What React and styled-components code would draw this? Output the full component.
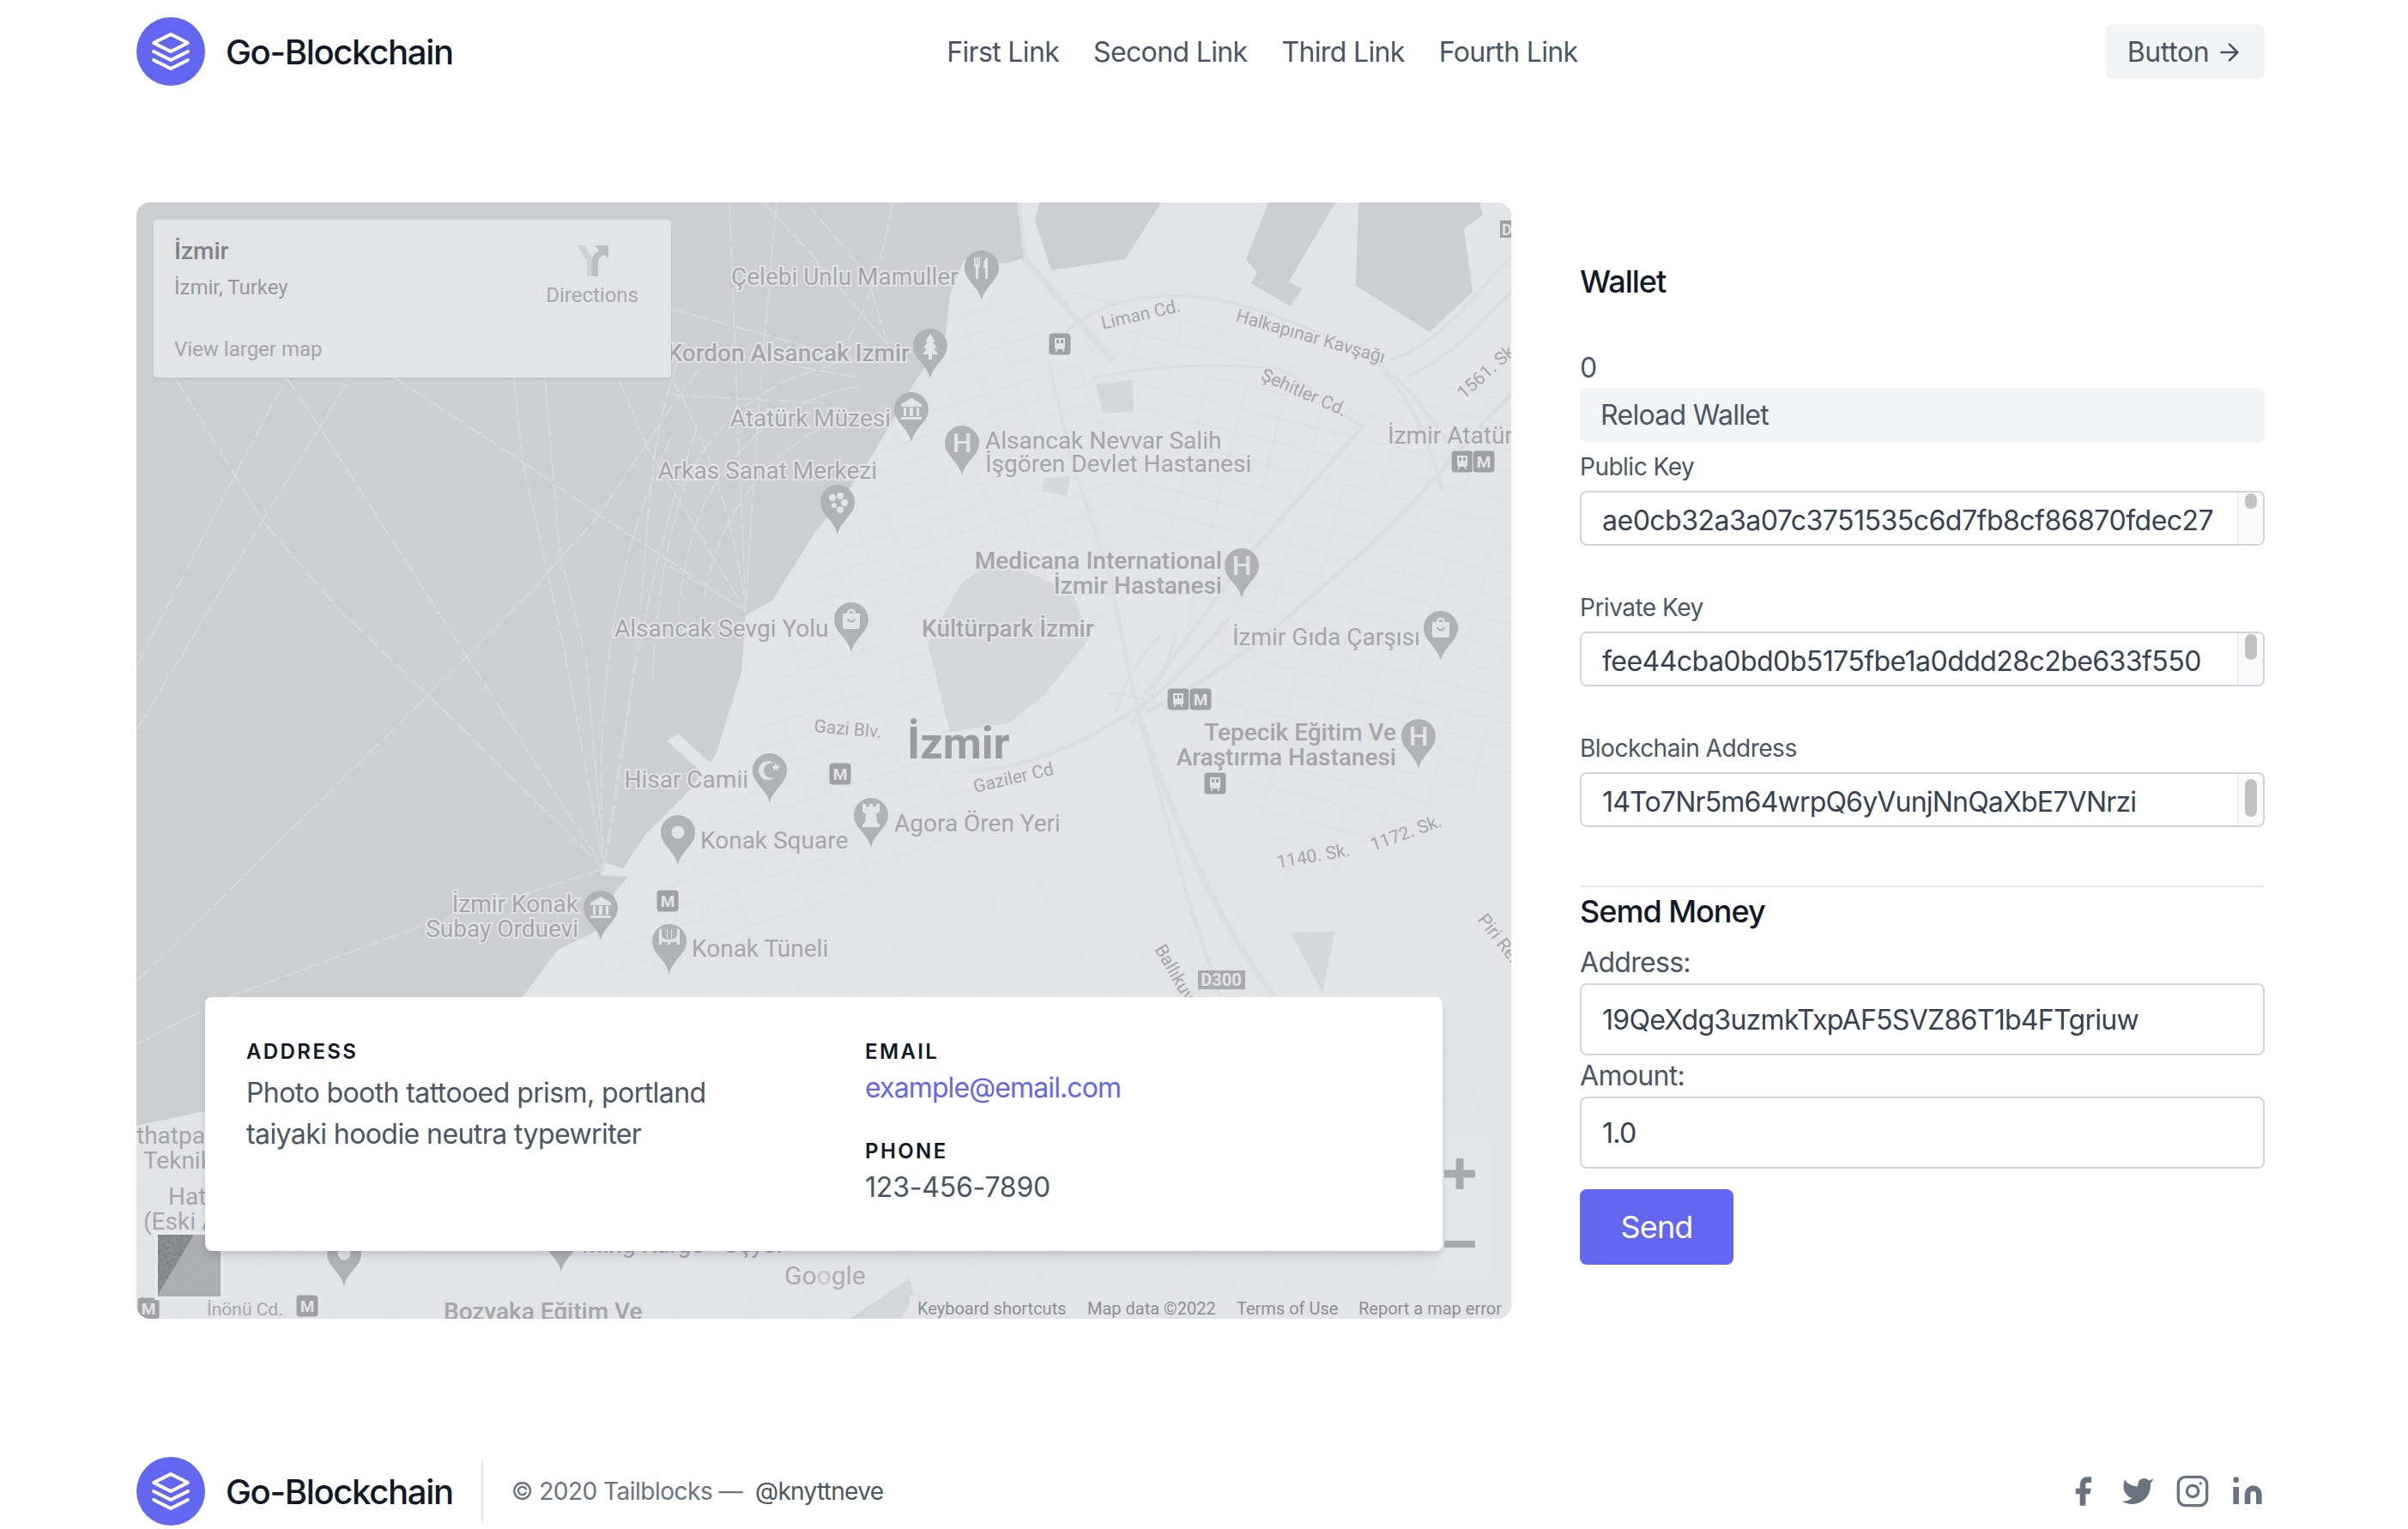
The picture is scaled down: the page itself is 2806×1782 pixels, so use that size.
import React from "react"
import styled, { createGlobalStyle } from "styled-components"

const GlobalStyle = createGlobalStyle`
  html, body {
    margin: 0;
    padding: 0;
    height: 1782px;
    overflow: hidden;
    background: #fff;
    font-family: Inter, "Liberation Sans", sans-serif;
  }
  * { box-sizing: border-box; }
`

const colors = {
  indigo: "#6366f1",
  dark: "#111827",
  text: "#4b5563",
  inputText: "#374151",
  muted: "#6b7280",
  line: "#e5e7eb",
  water: "#cdced2",
  land: "#e3e4e8",
  park: "#d6d7db",
  road: "#dcdde1",
  street: "#dcdde1",
  label: "#a5a6aa",
  pin: "#b1b2b6",
  badge: "#9fa0a4",
}

const Page = styled.div`
  width: 2806px;
  padding: 0 167px 0 159px;
`

const Header = styled.header`
  display: flex;
  align-items: center;
  height: 120px;
`

const Brand = styled.a`
  display: flex;
  align-items: center;
  font-size: 40px;
  line-height: 56px;
  font-weight: 500;
  letter-spacing: -1.3px;
  color: ${colors.dark};

  span {
    margin-left: 24px;
    padding-top: 2px;
  }
`

const LogoMark = styled.svg`
  width: 80px;
  height: 80px;
  padding: 16px;
  border-radius: 50%;
  background: ${colors.indigo};
  color: #fff;
  fill: none;
  stroke: currentColor;
  stroke-width: 2;
  stroke-linecap: round;
  stroke-linejoin: round;
`

const Nav = styled.nav`
  display: flex;
  margin: 0 auto;
  padding-top: 2px;
  font-size: 32px;
  line-height: 48px;
  letter-spacing: -0.65px;
  color: ${colors.text};

  a {
    margin-right: 40px;
  }
`

const HeaderButton = styled.button`
  display: flex;
  align-items: center;
  justify-content: center;
  width: 185px;
  height: 64px;
  padding: 2px 0 0;
  border: 0;
  border-radius: 8px;
  background: #f3f4f6;
  color: ${colors.text};
  font: inherit;
  font-size: 32px;
  line-height: 48px;
  letter-spacing: -0.4px;

  svg {
    width: 32px;
    height: 32px;
    margin-left: 8px;
    fill: none;
    stroke: currentColor;
    stroke-width: 2;
    stroke-linecap: round;
    stroke-linejoin: round;
  }
`

const Main = styled.main`
  display: flex;
  gap: 80px;
  padding-top: 116px;
`

const MapBox = styled.section`
  position: relative;
  display: flex;
  align-items: flex-end;
  flex: 0 0 1602px;
  height: 1301px;
  padding: 0 80px 79px;
  border-radius: 16px;
  overflow: hidden;
  background: ${colors.land};
`

const MapDrawing = styled.svg`
  position: absolute;
  inset: 0;
  width: 100%;
  height: 100%;
`

const MapText = styled.text`
  font-family: Roboto, "Liberation Sans", sans-serif;
  font-size: ${(p) => p.$size || 28}px;
  font-weight: ${(p) => p.$weight || 400};
  fill: ${(p) => p.$fill || colors.label};
  text-anchor: ${(p) => p.$anchor || "start"};
  stroke: ${(p) => (p.$noHalo ? "none" : p.$halo || colors.land)};
  stroke-width: 4px;
  paint-order: stroke;
`

const PlacePanel = styled.div`
  position: absolute;
  top: 20px;
  left: 20px;
  display: flex;
  justify-content: space-between;
  width: 603px;
  height: 184px;
  padding: 20px 38px 0 24px;
  border-radius: 4px;
  background: ${colors.land};
  box-shadow: 0 2px 4px rgba(0, 0, 0, 0.06);
  font-family: Roboto, "Liberation Sans", sans-serif;
`

const PlaceTitle = styled.div`
  font-size: 28px;
  line-height: 34px;
  font-weight: 500;
  color: #818286;
`

const PlaceSub = styled.div`
  margin-top: 10px;
  font-size: 24px;
  line-height: 30px;
  color: #97989c;
`

const LargerMap = styled.div`
  margin-top: 42px;
  font-size: 24px;
  line-height: 30px;
  color: #a5a6aa;
`

const Directions = styled.div`
  display: flex;
  flex-direction: column;
  align-items: center;
  padding-top: 8px;
  font-size: 24px;
  line-height: 30px;
  color: #a7a8ac;

  svg {
    width: 40px;
    height: 38px;
    margin-bottom: 7px;
  }
`

const ContactCard = styled.div`
  position: relative;
  display: flex;
  width: 100%;
  height: 296px;
  padding: 48px 0 0;
  border-radius: 8px;
  background: #fff;
  box-shadow: 0 8px 12px -2px rgba(0, 0, 0, 0.1), 0 4px 8px -2px rgba(0, 0, 0, 0.06);
`

const ContactColumn = styled.div`
  width: 50%;
  padding: 0 48px;
`

const ContactHeading = styled.h2`
  margin: ${(p) => (p.$spaced ? "32px" : "0")} 0 0;
  font-size: 24px;
  line-height: 32px;
  font-weight: 600;
  letter-spacing: 2.4px;
  color: ${colors.dark};
`

const ContactText = styled.p`
  margin: 8px 0 0;
  font-size: 32px;
  line-height: 48px;
  letter-spacing: -0.58px;
  color: ${colors.text};
`

const ContactLink = styled.a`
  display: block;
  font-size: 32px;
  line-height: 52px;
  letter-spacing: -0.88px;
  color: ${colors.indigo};
`

const ContactPhone = styled.p`
  margin: 0;
  font-size: 32px;
  line-height: 52px;
  letter-spacing: -0.2px;
  color: ${colors.text};
`

const Side = styled.aside`
  flex: 1;
  min-width: 0;
  padding-top: 64px;
`

const SideTitle = styled.h2`
  margin: 0 0 ${(p) => p.$gap}px;
  font-size: 36px;
  line-height: 56px;
  font-weight: 500;
  letter-spacing: -1px;
  color: ${colors.dark};
`

const Balance = styled.p`
  margin: 0;
  padding-top: 2px;
  font-size: 32px;
  line-height: 46px;
  color: ${colors.text};
`

const ReloadButton = styled.button`
  display: block;
  width: 100%;
  height: 64px;
  padding: 8px 24px;
  border: 0;
  border-radius: 8px;
  background: #f3f4f6;
  color: ${colors.text};
  font: inherit;
  font-size: 32px;
  line-height: 48px;
  letter-spacing: -0.7px;
  text-align: left;
`

const SmallLabel = styled.label`
  display: block;
  font-size: 28px;
  line-height: 56px;
  letter-spacing: -0.5px;
  color: ${colors.text};
`

const KeyField = styled.div`
  display: flex;
  height: 64px;
  margin-bottom: 44px;
  border: 2px solid #d1d5db;
  border-radius: 8px;
  overflow: hidden;
  background: #fff;
`

const KeyValue = styled.div`
  flex: 1;
  min-width: 0;
  padding: 7px 24px 0;
  font-size: 32px;
  line-height: 52px;
  letter-spacing: ${(p) => p.$tracking}px;
  color: ${colors.inputText};
  white-space: nowrap;
`

const ScrollTrack = styled.div`
  flex: 0 0 30px;
  padding: ${(p) => p.$offset}px 7px 0 8px;
  border-left: 1px solid #e8e8e8;
  background: #fafafa;
`

const ScrollThumb = styled.div`
  height: ${(p) => p.$height}px;
  border-radius: 8px;
  background: #c1c1c1;
`

const Divider = styled.hr`
  height: 2px;
  margin: 68px 0 0;
  border: 0;
  background: ${colors.line};
`

const FieldLabel = styled.label`
  display: block;
  font-size: 32px;
  line-height: 48px;
  letter-spacing: -0.7px;
  color: ${colors.text};
`

const TextInput = styled.input`
  display: block;
  width: 100%;
  height: 84px;
  padding: 4px 24px;
  border: 2px solid #d1d5db;
  border-radius: 8px;
  outline: 0;
  background: #fff;
  color: ${colors.inputText};
  font: inherit;
  font-size: 32px;
  line-height: 52px;
  letter-spacing: -0.7px;
`

const SendButton = styled.button`
  display: block;
  width: 179px;
  height: 88px;
  margin-top: 24px;
  padding: 16px 0;
  border: 0;
  border-radius: 8px;
  background: ${colors.indigo};
  color: #fff;
  font: inherit;
  font-size: 36px;
  line-height: 56px;
  letter-spacing: -0.9px;
`

const Footer = styled.footer`
  display: flex;
  align-items: center;
  height: 84px;
  margin-top: 159px;
`

const FooterNote = styled.p`
  display: flex;
  align-items: center;
  height: 72px;
  margin: 0 0 0 33px;
  padding-left: 33px;
  border-left: 2px solid ${colors.line};
  font-size: 28px;
  line-height: 40px;
  letter-spacing: -0.5px;
  color: ${colors.muted};

  a {
    margin-left: 15px;
    letter-spacing: -0.7px;
    color: ${colors.text};
  }
`

const Socials = styled.div`
  display: flex;
  gap: 24px;
  margin-left: auto;
  color: ${colors.muted};
`

const SocialIcon = styled.svg`
  width: 40px;
  height: 40px;
  fill: ${(p) => (p.$outline ? "none" : "currentColor")};
  stroke: ${(p) => (p.$outline ? "currentColor" : "none")};
  stroke-width: 2;
  stroke-linecap: round;
  stroke-linejoin: round;
`

const Logo = () => (
  <LogoMark viewBox="0 0 24 24">
    <path d="M12 2L2 7l10 5 10-5-10-5zM2 17l10 5 10-5M2 12l10 5 10-5" />
  </LogoMark>
)

const seaLines = [
  "M204 440L306 607L395 710L499 810L704 1013",
  "M334 440L372 497L502 700L704 1013",
  "M160 1143L499 810L609 700L698 600L783 473L815 430",
  "M160 777L183 730L272 557L334 440",
  "M160 850L250 700L306 607L408 440",
  "M459 440L607 537L698 600L869 712",
  "M599 440L609 537L652 730L658 760L704 1013",
  "M635 440L652 643L683 767L704 1013",
  "M720 440L755 523L869 712",
  "M704 1013L497 1077L267 1162L159 1217",
  "M782 440Q850 560 869 712",
  "M790 420C740 560 770 640 704 1013",
  "M782 510C720 640 690 800 704 1013",
  "M812 500C760 640 730 820 704 1013",
  "M780 660L869 712",
  "M1000 420Q860 440 800 560Q770 640 760 790",
  "M1000 450Q890 470 830 570Q800 620 790 720",
  "M1000 480Q910 510 860 590Q830 640 820 700",
  "M850 236Q860 500 869 712",
  "M905 236Q880 500 869 712",
  "M890 236L946 297L1050 420",
  "M940 236L1010 320L1040 420",
  "M1040 236Q1010 400 960 420",
  "M782 400L1000 440",
  "M782 460L960 470",
  "M782 360L1000 420",
]

const waterShapes = [
  "M159 236H1185L1193 300L1175 307L1123 303L1107 343L1102 390L1065 447L1021 523L981 583L950 620L900 700L869 717L864 783L834 880L798 927L752 973L726 1012L704 1005L700 1020L732 1022L716 1040L711 1077L650 1107L609 1162L560 1250L239 1295L159 1312Z",
  "M1211 236H1353L1311 302L1225 315L1206 257Z",
  "M1478 236H1556L1502 328L1517 337L1504 357L1457 330L1465 318L1452 302Z",
  "M1583 236H1724L1728 250L1706 267L1716 340L1666 387L1580 333Z",
]

const parkShapes = [
  "M1120 680L1160 650L1250 690L1269 745L1217 810L1175 843L1107 853L1081 750Z",
  "M1277 447L1320 443L1321 480L1285 482Z",
  "M1217 558L1248 555L1243 578L1214 572Z",
  "M1504 1087L1556 1085L1541 1157Z",
  "M990 1537L1060 1490L1065 1510L1050 1537Z",
]

const mainRoads = [
  ["M1222 410C1265 350 1325 345 1375 345C1435 345 1530 380 1600 420C1640 445 1670 490 1690 520", 4],
  ["M1272 440C1335 430 1395 420 1490 430C1530 450 1560 480 1590 500", 3],
  ["M1590 495L1452 650L1335 810", 5],
  ["M1761 460C1700 520 1650 590 1580 650C1490 730 1420 790 1335 830", 5],
  ["M1326 830C1365 950 1410 1060 1485 1162", 7],
  ["M1296 690L1326 830L1385 1050L1422 1162", 4],
  ["M1128 900C1228 890 1285 850 1335 820C1375 790 1405 750 1432 720", 5],
  ["M1185 236L1193 300L1296 420", 8],
  ["M1222 420L1247 530L1296 680L1326 830", 3],
  ["M1610 430C1650 470 1670 530 1680 570", 4],
  ["M1300 830C1310 790 1335 760 1352 740M1318 845C1345 810 1365 770 1370 735M1290 808C1320 810 1340 815 1370 830", 3],
  ["M1620 420C1680 400 1720 340 1761 300M1640 440C1700 410 1730 370 1761 340", 3],
]

const pins = [
  { cx: 1144, top: 292, glyph: "fork" },
  { cx: 1084, top: 383, glyph: "tree" },
  { cx: 1062, top: 457, glyph: "museum" },
  { cx: 1121, top: 496, glyph: "H" },
  { cx: 976, top: 565, glyph: "palette" },
  { cx: 1447, top: 639, glyph: "H" },
  { cx: 992, top: 702, glyph: "bag" },
  { cx: 1679, top: 712, glyph: "bag" },
  { cx: 1653, top: 838, glyph: "H" },
  { cx: 1015, top: 930, glyph: "rook" },
  { cx: 897, top: 878, glyph: "crescent" },
  { cx: 790, top: 950, glyph: "dot" },
  { cx: 700, top: 1038, glyph: "museum" },
  { cx: 780, top: 1077, glyph: "bridge" },
  { cx: 401, top: 1441, glyph: "dot" },
  { cx: 654, top: 1424, glyph: "dot" },
]

const badges = [
  { x: 1222, y: 388, kind: "train" },
  { x: 1691, y: 525, kind: "train" },
  { x: 1716, y: 525, kind: "M" },
  { x: 1360, y: 802, kind: "train" },
  { x: 1386, y: 802, kind: "M" },
  { x: 1403, y: 900, kind: "train" },
  { x: 966, y: 889, kind: "M" },
  { x: 765, y: 1037, kind: "M" },
  { x: 160, y: 1512, kind: "M" },
  { x: 345, y: 1509, kind: "M" },
]

// x, y, text, then optional size / weight / anchor / rotation
const labels = [
  { x: 852, y: 332, t: "Çelebi Unlu Mamuller" },
  { x: 1060, y: 421, t: "Kordon Alsancak Izmir", anchor: "end", weight: 500 },
  { x: 1038, y: 497, t: "Atatürk Müzesi", anchor: "end" },
  { x: 1022, y: 558, t: "Arkas Sanat Merkezi", anchor: "end" },
  { x: 1148, y: 523, t: "Alsancak Nevvar Salih" },
  { x: 1148, y: 550, t: "İşgören Devlet Hastanesi" },
  { x: 1424, y: 663, t: "Medicana International", anchor: "end", weight: 500 },
  { x: 1424, y: 692, t: "İzmir Hastanesi", anchor: "end", weight: 500 },
  { x: 716, y: 742, t: "Alsancak Sevgi Yolu" },
  { x: 1074, y: 742, t: "Kültürpark İzmir", weight: 500 },
  { x: 1436, y: 752, t: "İzmir Gıda Çarşısı" },
  { x: 1057, y: 884, t: "İzmir", size: 52, weight: 700, fill: "#9a9b9f" },
  { x: 948, y: 853, t: "Gazi Blv.", size: 21, rot: 5 },
  { x: 1136, y: 924, t: "Gaziler Cd", size: 21, rot: -13 },
  { x: 1627, y: 863, t: "Tepecik Eğitim Ve", anchor: "end", weight: 500 },
  { x: 1627, y: 892, t: "Araştırma Hastanesi", anchor: "end", weight: 500 },
  { x: 1042, y: 969, t: "Agora Ören Yeri" },
  { x: 816, y: 989, t: "Konak Square" },
  { x: 872, y: 918, t: "Hisar Camii", anchor: "end" },
  { x: 674, y: 1063, t: "İzmir Konak", anchor: "end" },
  { x: 674, y: 1092, t: "Subay Orduevi", anchor: "end" },
  { x: 806, y: 1115, t: "Konak Tüneli" },
  { x: 1489, y: 1012, t: "1140. Sk.", size: 21, rot: -10 },
  { x: 1600, y: 992, t: "1172. Sk.", size: 21, rot: -20 },
  { x: 1285, y: 384, t: "Liman Cd.", size: 21, rot: -13 },
  { x: 1439, y: 374, t: "Halkapınar Kavşağı", size: 21, rot: 16 },
  { x: 1468, y: 442, t: "Şehitler Cd.", size: 21, rot: 24 },
  { x: 1706, y: 466, t: "1561. Sk.", size: 21, rot: -42 },
  { x: 1617, y: 517, t: "İzmir Atatürk" },
  { x: 1721, y: 1072, t: "Piri Reis", size: 21, rot: 52 },
  { x: 1345, y: 1106, t: "Ballıkuyu", size: 21, rot: 60 },
  { x: 159, y: 1333, t: "thatpa" },
  { x: 167, y: 1362, t: "Teknik" },
  { x: 196, y: 1404, t: "Hat" },
  { x: 167, y: 1433, t: "(Eski A" },
  { x: 241, y: 1533, t: "İnönü Cd.", size: 21 },
  { x: 517, y: 1538, t: "Bozyaka Eğitim Ve", weight: 500 },
  { x: 678, y: 1460, t: "Ming Kargo - Üçyol" },
]

const attribution = [
  { x: 1069, t: "Keyboard shortcuts" },
  { x: 1267, t: "Map data ©2022" },
  { x: 1441, t: "Terms of Use" },
  { x: 1583, t: "Report a map error" },
]

const PinGlyph = ({ glyph }) => {
  const ink = colors.land
  switch (glyph) {
    case "H":
      return (
        <MapText x="20" y="31" $size={32} $weight={500} $fill={ink} $anchor="middle" $noHalo>
          H
        </MapText>
      )
    case "dot":
      return <circle cx="20" cy="20" r="7.5" fill={ink} />
    case "fork":
      return <path d="M11 8v9c0 2 1 3 2 3v13h3V20c1 0 2-1 2-3V8h-1.500v8h-1V8h-1.500v8h-1V8zM26 8c-3 2-4 6-4 12h2v13h3V8z" fill={ink} />
    case "tree":
      return <path d="M20 6l-6 9h3l-5 8h4l-5 7h7v6h4v-6h7l-5-7h4l-5-8h3z" fill={ink} />
    case "museum":
      return <path d="M20 7L8 14v3h24v-3zM11 18h3v10h-3zM18 18h4v10h-4zM26 18h3v10h-3zM8 29h24v3H8z" fill={ink} />
    case "palette":
      return (
        <g fill={ink}>
          <circle cx="14" cy="15" r="4" />
          <circle cx="23" cy="13" r="4" />
          <circle cx="28" cy="21" r="4" />
          <circle cx="23" cy="29" r="4" />
          <circle cx="16" cy="24" r="3" />
        </g>
      )
    case "bag":
      return <path d="M15 13c0-7 10-7 10 0h5v16a2 2 0 01-2 2H12a2 2 0 01-2-2V13zm2.500 0h5c0-4-5-4-5 0zM15 19c1 6 9 6 10 0h-2c-1 3-5 3-6 0z" fill={ink} fillRule="evenodd" />
    case "rook":
      return <path d="M10 7h4v3h4V7h4v3h4V7h4v9l-4 3 1 9 3 3v3H10v-3l3-3 1-9-4-3z" fill={ink} />
    case "crescent":
      return (
        <g>
          <circle cx="18" cy="20" r="11" fill={ink} />
          <circle cx="22" cy="20" r="9" fill={colors.pin} />
          <path d="M27 11l1.500 3.500 3.500.3-2.700 2.200.9 3.500-3.200-2-3.200 2 .9-3.500-2.700-2.200 3.500-.3z" fill={ink} />
        </g>
      )
    case "bridge":
      return <path d="M8 6h3v8c2 3 5 4 6 4V6h1v12h4V6h1v12c1 0 4-1 6-4V6h3v18h-3v-3h-8v3h-3v-3h-7v3H8z" fill={ink} />
    default:
      return null
  }
}

const MapPin = ({ cx, top, glyph }) => (
  <g transform={`translate(${cx - 20} ${top})`}>
    <path d="M20 0C9 0 0 9 0 20c0 15 16 21 20 38 4-17 20-23 20-38C40 9 31 0 20 0z" fill={colors.pin} />
    <PinGlyph glyph={glyph} />
  </g>
)

const MapBadge = ({ x, y, kind }) => (
  <g transform={`translate(${x} ${y})`}>
    <rect width="26" height="26" rx="4" fill={colors.badge} stroke={colors.land} strokeWidth="1" />
    {kind === "M" ? (
      <MapText x="13" y="20" $size={19} $weight={700} $fill={colors.land} $anchor="middle" $noHalo>
        M
      </MapText>
    ) : (
      <path d="M8 6h10a1 1 0 011 1v10a2 2 0 01-2 2H9a2 2 0 01-2-2V7a1 1 0 011-1zm1 2v4h3V8zm5 0v4h3V8zM9 19l-1.500 3h2L10.500 19zm8 0l1.500 3h-2l-1-3z" fill={colors.land} fillRule="evenodd" />
    )}
  </g>
)

const CityMap = () => (
  <MapDrawing viewBox="159 236 1602 1301" preserveAspectRatio="none">
    <defs>
      <pattern id="streetsA" width="38" height="24" patternUnits="userSpaceOnUse" patternTransform="rotate(-18)">
        <path d="M38 0H0V24" fill="none" stroke={colors.street} strokeWidth="1.400" />
      </pattern>
      <pattern id="streetsB" width="46" height="28" patternUnits="userSpaceOnUse" patternTransform="rotate(14)">
        <path d="M46 0H0V28" fill="none" stroke={colors.street} strokeWidth="1.400" />
      </pattern>
      <pattern id="streetsC" width="60" height="44" patternUnits="userSpaceOnUse" patternTransform="rotate(-32)">
        <path d="M60 0H0V44" fill="none" stroke="#dfe0e4" strokeWidth="1.200" />
      </pattern>
      <filter id="grain" x="0" y="0" width="100%" height="100%">
        <feTurbulence type="fractalNoise" baseFrequency="0.3" numOctaves="3" />
        <feColorMatrix values="0 0 0 0 .45  0 0 0 0 .45  0 0 0 0 .47  0 0 0 1.400 -.45" />
      </filter>
    </defs>

    <rect x="159" y="236" width="1602" height="1301" fill={colors.land} />
    <path d="M1130 320L1300 460L1300 700L1090 1000L800 1130L700 1130L870 900L960 640Z" fill="url(#streetsA)" />
    <path d="M1340 500L1761 440V900L1500 1030L1400 780Z" fill="url(#streetsB)" />
    <path d="M620 1130L1761 930V1537H159V1320Z" fill="url(#streetsC)" />
    <path d="M1240 330L1480 400L1580 500L1340 660L1280 450Z" fill="url(#streetsB)" />

    {mainRoads.map(([d, width]) => (
      <path key={d} d={d} fill="none" stroke={colors.road} strokeWidth={width} />
    ))}
    {waterShapes.map((d) => (
      <path key={d} d={d} fill={colors.water} />
    ))}
    {parkShapes.map((d) => (
      <path key={d} d={d} fill={colors.park} />
    ))}
    <path d="M777 863L790 855L832 893L820 902Z" fill={colors.land} />
    {seaLines.map((d) => (
      <path key={d} d={d} fill="none" stroke="#dadbde" strokeWidth="1.500" strokeDasharray="20 5" />
    ))}

    {labels.map((l) => (
      <MapText
        key={l.t}
        x={l.x}
        y={l.y}
        $size={l.size}
        $weight={l.weight}
        $anchor={l.anchor}
        $fill={l.fill}
        transform={l.rot ? `rotate(${l.rot} ${l.x} ${l.y})` : undefined}
      >
        {l.t}
      </MapText>
    ))}
    {pins.map((p) => (
      <MapPin key={`${p.cx}-${p.top}`} {...p} />
    ))}
    {badges.map((b) => (
      <MapBadge key={`${b.x}-${b.y}`} {...b} />
    ))}

    <rect x="1396" y="1131" width="55" height="22" fill="#aaabae" />
    <MapText x="1423" y="1149" $size={20} $weight={700} $fill={colors.land} $anchor="middle" $noHalo>
      D300
    </MapText>
    <rect x="1748" y="257" width="14" height="20" fill={colors.badge} />
    <MapText x="1750" y="274" $size={18} $weight={700} $fill={colors.land} $noHalo>
      D
    </MapText>

    <rect x="1672" y="1327" width="68" height="163" fill="#e5e6ea" />
    <path d="M1701 1350v36M1683 1368h36" stroke="#a9aaae" strokeWidth="9" />
    <path d="M1683 1450h36" stroke="#a9aaae" strokeWidth="8" />

    <rect x="180" y="1435" width="81" height="80" fill="#e8e9ec" />
    <rect x="184" y="1439" width="73" height="72" fill="#acadb0" />
    <path d="M184 1439h42l-42 70z" fill="#808185" />
    <rect x="184" y="1439" width="73" height="72" filter="url(#grain)" opacity="0.6" />

    <MapText x="914" y="1497" $size={30} $fill="#acadb1" $noHalo>
      Go<tspan fill="#c3c4c8">o</tspan>gle
    </MapText>

    <rect x="1060" y="1509" width="701" height="28" fill={colors.land} opacity="0.85" />
    {attribution.map((a) => (
      <MapText key={a.t} x={a.x} y="1532" $size={20} $fill="#8e8f93" $noHalo>
        {a.t}
      </MapText>
    ))}
  </MapDrawing>
)

const KeyRow = ({ label, value, thumb, offset, tracking }) => (
  <>
    <SmallLabel>{label}</SmallLabel>
    <KeyField>
      <KeyValue $tracking={tracking}>{value}</KeyValue>
      <ScrollTrack $offset={offset}>
        <ScrollThumb $height={thumb} />
      </ScrollTrack>
    </KeyField>
  </>
)

const App = () => {
  return (
    <Page>
      <GlobalStyle />
      <Header>
        <Brand>
          <Logo />
          <span>Go-Blockchain</span>
        </Brand>
        <Nav>
          <a>First Link</a>
          <a>Second Link</a>
          <a>Third Link</a>
          <a>Fourth Link</a>
        </Nav>
        <HeaderButton>
          Button
          <svg viewBox="0 0 24 24">
            <path d="M5 12h14M12 5l7 7-7 7" />
          </svg>
        </HeaderButton>
      </Header>

      <Main>
        <MapBox>
          <CityMap />
          <PlacePanel>
            <div>
              <PlaceTitle>İzmir</PlaceTitle>
              <PlaceSub>İzmir, Turkey</PlaceSub>
              <LargerMap>View larger map</LargerMap>
            </div>
            <Directions>
              <svg viewBox="0 0 40 38">
                <path d="M2 2h9l9 14v22h-6V20z" fill="#cfd0d4" />
                <path d="M20 38V20c0-5 3-9 8-12l-5-6h16v16l-5-5c-4 2-7 5-7 9v16z" fill="#bdbec2" />
              </svg>
              Directions
            </Directions>
          </PlacePanel>
          <ContactCard>
            <ContactColumn>
              <ContactHeading>ADDRESS</ContactHeading>
              <ContactText>
                Photo booth tattooed prism, portland
                <br />
                taiyaki hoodie neutra typewriter
              </ContactText>
            </ContactColumn>
            <ContactColumn>
              <ContactHeading>EMAIL</ContactHeading>
              <ContactLink>example@email.com</ContactLink>
              <ContactHeading $spaced>PHONE</ContactHeading>
              <ContactPhone>123-456-7890</ContactPhone>
            </ContactColumn>
          </ContactCard>
        </MapBox>

        <Side>
          <SideTitle $gap={48}>Wallet</SideTitle>
          <Balance>0</Balance>
          <ReloadButton>Reload Wallet</ReloadButton>
          <KeyRow label="Public Key" value="ae0cb32a3a07c3751535c6d7fb8cf86870fdec27" thumb={18} offset={1} tracking={-0.5} />
          <KeyRow label="Private Key" value="fee44cba0bd0b5175fbe1a0ddd28c2be633f550" thumb={30} offset={1} tracking={-0.55} />
          <KeyRow label="Blockchain Address" value="14To7Nr5m64wrpQ6yVunjNnQaXbE7VNrzi" thumb={44} offset={6} tracking={-0.8} />
          <Divider />
          <SideTitle $gap={8}>Semd Money</SideTitle>
          <FieldLabel>Address:</FieldLabel>
          <TextInput readOnly value="19QeXdg3uzmkTxpAF5SVZ86T1b4FTgriuw" />
          <FieldLabel>Amount:</FieldLabel>
          <TextInput readOnly value="1.0" />
          <SendButton>Send</SendButton>
        </Side>
      </Main>

      <Footer>
        <Brand>
          <Logo />
          <span>Go-Blockchain</span>
        </Brand>
        <FooterNote>
          © 2020 Tailblocks —<a>@knyttneve</a>
        </FooterNote>
        <Socials>
          <SocialIcon viewBox="0 0 24 24">
            <path d="M18 2h-3a5 5 0 00-5 5v3H7v4h3v8h4v-8h3l1-4h-4V7a1 1 0 011-1h3z" />
          </SocialIcon>
          <SocialIcon viewBox="0 0 24 24">
            <path d="M23 3a10.900 10.900 0 01-3 1.530 4.480 4.480 0 00-7.860 3v1A10.660 10.660 0 013 4s-4 9 5 13a11.640 11.640 0 01-7 2c9 5 20 0 20-11.500a4.500 4.500 0 00-.08-.83A7.720 7.720 0 0023 3z" />
          </SocialIcon>
          <SocialIcon viewBox="0 0 24 24" $outline>
            <rect width="20" height="20" x="2" y="2" rx="5" ry="5" />
            <path d="M16 11.370A4 4 0 1112.630 8 4 4 0 0116 11.370zm1.500-4.870h.01" />
          </SocialIcon>
          <SocialIcon viewBox="0 0 24 24">
            <path d="M16 8a6 6 0 016 6v7h-4v-7a2 2 0 00-2-2 2 2 0 00-2 2v7h-4v-7a6 6 0 016-6zM2 9h4v12H2z" />
            <circle cx="4" cy="4" r="2" />
          </SocialIcon>
        </Socials>
      </Footer>
    </Page>
  )
}

export default App
